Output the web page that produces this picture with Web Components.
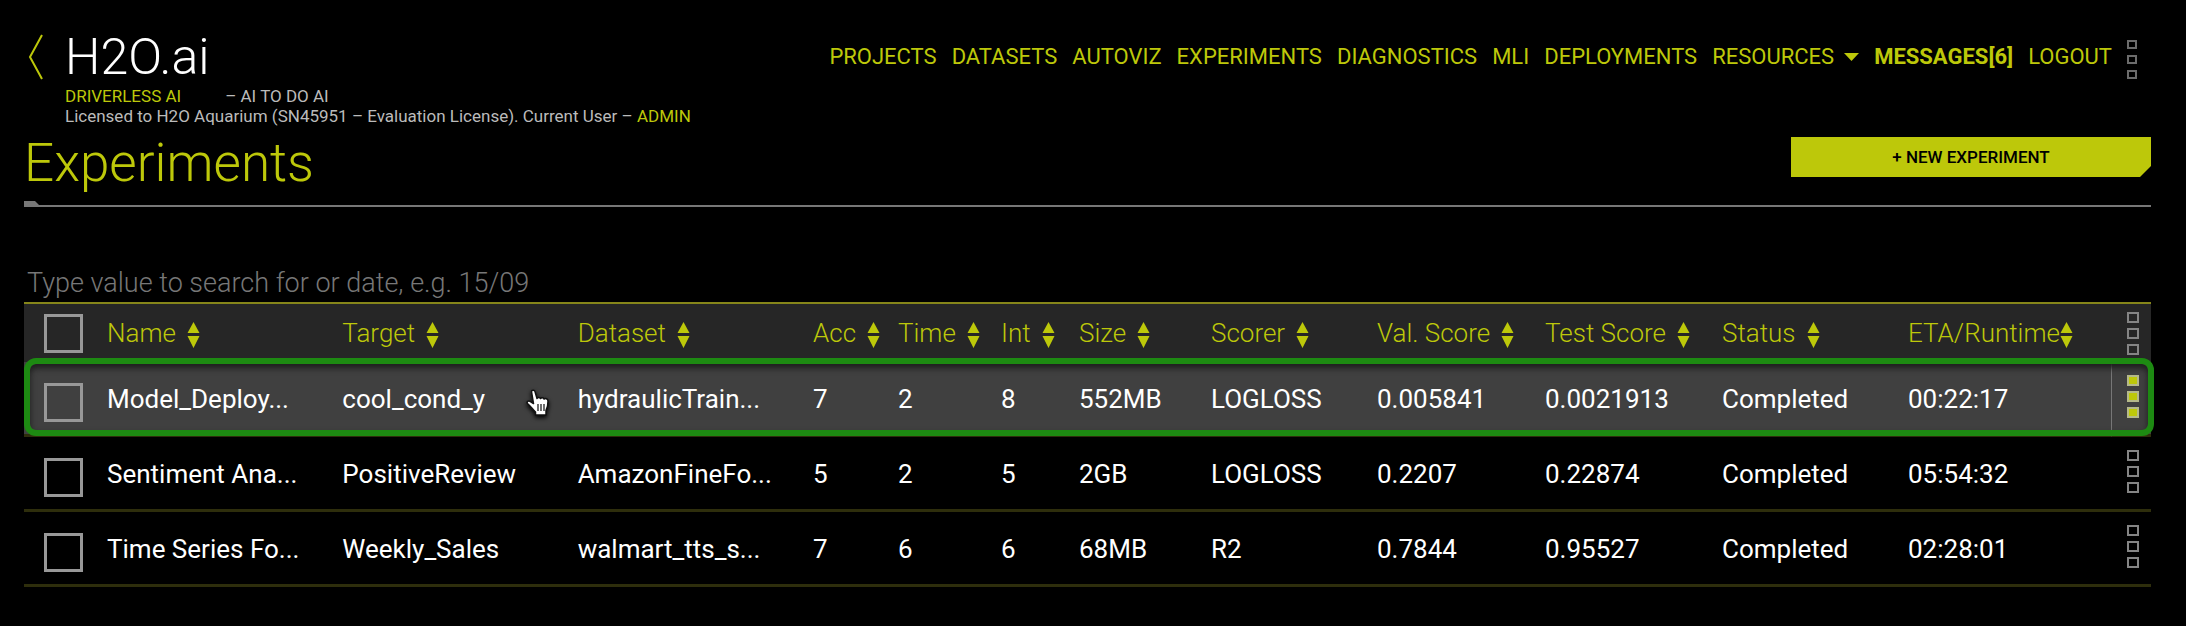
<!DOCTYPE html>
<html lang="en">
<head>
<meta charset="utf-8">
<title>Experiments</title>
<style>
  :root { --lime: #bdc80a; --line: #2e2e0c; }
  body { margin: 0; background: #000; color: #fff; font-family: Roboto, "Liberation Sans", sans-serif; }
</style>
</head>
<body>
<experiments-page></experiments-page>

<script>
const define = (name, html, setup) => customElements.define(name, class extends HTMLElement {
  constructor() {
    super();
    const template = document.createElement('template');
    template.innerHTML = html;
    this.attachShadow({ mode: 'open' }).append(template.content.cloneNode(true));
  }
  connectedCallback() { if (setup) setup.call(this, this.shadowRoot); }
});

/* Three stacked squares that open a menu */
define('kebab-menu', `
  <style>
    :host { display: block; }
    button { display: flex; flex-direction: column; gap: 5px; padding: 0; border: 0; background: none; }
    i { box-sizing: border-box; width: 12px; height: 11px; border: 2px solid #858585; }
    :host([active]) i { background: var(--lime); border-color: #b5b98a; }
    :host([small]) button { gap: 6px; }
    :host([small]) i { width: 10px; height: 9px; border-color: #6c6c6c; }
  </style>
  <button type="button" aria-label="More actions"><i></i><i></i><i></i></button>`);

define('sort-icon', `
  <style>:host { display: inline-block; margin-left: 11px; vertical-align: middle; } svg { display: block; }</style>
  <svg width="13" height="26" viewBox="0 0 13 26" fill="#bdc80a" aria-hidden="true">
    <path d="M6.500 0L12.500 11H.5zM.5 14H12.500L6.500 26z"/>
  </svg>`);

define('row-check', `
  <style>
    :host { display: block; }
    input { display: block; box-sizing: border-box; width: 39px; height: 39px; margin: 0;
            appearance: none; border: 3px solid #989898; }
  </style>
  <input type="checkbox">`, function (root) {
    root.querySelector('input').setAttribute('aria-label', this.getAttribute('label'));
  });

define('hand-pointer', `
  <style>:host { display: block; } svg { display: block; overflow: visible; filter: drop-shadow(0 2px 2px #000); }</style>
  <svg width="24" height="28" viewBox="0 0 24 28" aria-hidden="true">
    <path fill="#fff" stroke="#111" stroke-width="1.500" stroke-linejoin="round"
      d="M5.500 2.500C5.500 1 8.500.5 9 2.500l2 7c.5-1.500 3-1.500 3.500 0 .8-1.200 3-1 3.500.6 1-1 4-.4 4 1.800 0 4.500-.5 7-2 9.500V26H9.500v-3C7 21 5 17.500 1.500 14.500c-1.200-1.200.5-3.200 2.500-2.200l3.500 2.200z"/>
    <path stroke="#222" stroke-width="1.300" d="M12 15v7M15 15v7M18 15v7"/>
  </svg>`);

define('app-brand', `
  <style>
    :host { display: flex; gap: 22px; }
    svg { display: block; margin-top: 34px; }
    a.logo { display: block; color: #fff; text-decoration: none; font-size: 50px; font-weight: 300; line-height: 56px; padding-top: 29px; }
    p { margin: 0; font-size: 17px; line-height: 20px; color: #bbb; white-space: nowrap; }
    p.tag { display: flex; gap: 44px; padding-top: 1px; }
    b { font-weight: 400; color: var(--lime); }
  </style>
  <svg width="15" height="46" viewBox="0 0 15 46" fill="none" stroke="#bdc80a" stroke-width="2" role="img" aria-label="Back">
    <path d="M14 1L2 23l12 22"/>
  </svg>
  <div>
    <a class="logo" href="#"><slot name="logo"></slot></a>
    <p class="tag"><b>DRIVERLESS AI</b><span>– AI TO DO AI</span></p>
    <p><slot name="license"></slot> <b><slot name="user"></slot></b></p>
  </div>`);

define('nav-link', `
  <style>
    :host { display: block; }
    a { display: flex; align-items: center; gap: 10px; color: var(--lime); text-decoration: none; font-size: 22px; line-height: 24px; white-space: nowrap; }
    :host([strong]) a { font-weight: 700; }
    svg { display: none; }
    :host([menu]) svg { display: block; }
  </style>
  <a href="#"><slot></slot><svg width="15" height="8" viewBox="0 0 15 8" fill="#bdc80a"><path d="M0 0h15L7.500 8z"/></svg></a>`);

define('main-nav', `
  <style>
    :host { display: block; }
    nav { display: flex; align-items: center; gap: 15px; padding-top: 45px; }
  </style>
  <nav><slot></slot></nav>`);

define('page-heading', `
  <style>
    :host { display: block; }
    .bar { display: flex; justify-content: space-between; height: 66px; }
    h1 { margin: 0; font-size: 53px; font-weight: 300; line-height: 56px; color: var(--lime); }
    button { width: 360px; height: 40px; margin-top: 2px; padding: 0; border: 0; background: var(--lime); color: #000;
             font: 500 17px/20px Roboto, sans-serif; clip-path: polygon(0 0, 100% 0, 100% 29px, calc(100% - 11px) 100%, 0 100%); }
    .rule { height: 6px; box-sizing: border-box; border-bottom: 2px solid #777; }
    .rule::before { content: ""; display: block; width: 16px; height: 5px; background: #777; clip-path: polygon(0 0, 11px 0, 100% 100%, 0 100%); }
  </style>
  <div class="bar"><h1><slot></slot></h1><button type="button"><slot name="action"></slot></button></div>
  <div class="rule"></div>`);

define('search-field', `
  <style>
    :host { display: block; }
    input { display: block; box-sizing: border-box; width: 100%; height: 42px; padding: 2px 3px 0; border: 0; outline: 0;
            border-bottom: 2px solid #86861a; background: none; color: #fff; font: 300 27px/38px Roboto, sans-serif; }
    input::placeholder { color: #777; opacity: 1; }
  </style>
  <input type="text" aria-label="Search experiments" placeholder="Type value to search for or date, e.g. 15/09">`);

const columns = ['Name', 'Target', 'Dataset', 'Acc', 'Time', 'Int', 'Size', 'Scorer', 'Val. Score', 'Test Score', 'Status', 'ETA/Runtime'];
const rows = [
  ['Model_Deploy...', 'cool_cond_y', 'hydraulicTrain...', '7', '2', '8', '552MB', 'LOGLOSS', '0.005841', '0.0021913', 'Completed', '00:22:17'],
  ['Sentiment Ana...', 'PositiveReview', 'AmazonFineFo...', '5', '2', '5', '2GB', 'LOGLOSS', '0.2207', '0.22874', 'Completed', '05:54:32'],
  ['Time Series Fo...', 'Weekly_Sales', 'walmart_tts_s...', '7', '6', '6', '68MB', 'R2', '0.7844', '0.95527', 'Completed', '02:28:01']
];
/* Zero marks a column that shares the width left over */
const widths = [63, 0, 0, 0, 85, 103, 78, 132, 166, 168, 177, 186, 223, 40];

define('experiments-table', `
  <style>
    :host { display: block; }
    table { width: 100%; table-layout: fixed; border-collapse: separate; border-spacing: 0; font-size: 26px; line-height: 32px; }
    th, td { padding: 0 0 0 20px; text-align: left; white-space: nowrap; box-sizing: border-box; }
    th { height: 58px; background: #262626; color: var(--lime); font-weight: 300; }
    td { height: 75px; padding-top: 2px; border-bottom: 3px solid var(--line); }
    td row-check { margin-top: 6px; }
    td kebab-menu { margin-bottom: 6px; }
    .menu { padding-left: 16px; }
    .tight sort-icon { margin-left: 0; }
    .selected { position: relative; }
    .selected td { background: #404040; }
    .selected .menu { border-left: 1px solid #777; padding-left: 15px; }
    .ring { position: absolute; z-index: 1; inset: -4px -3px 1px 0; border: 6px solid #1d8a12; border-radius: 12px;
            box-shadow: inset 0 4px 6px #1c1c1c; pointer-events: none; }
    .selected td:nth-child(3) { position: relative; }
    hand-pointer { position: absolute; left: 204px; top: 27px; }
  </style>
  <table>
    <colgroup>${widths.map(w => w ? `<col style="width:${w}px">` : '<col>').join('')}</colgroup>
    <thead><tr><th><row-check label="Select all"></row-check></th>${columns.map(c =>
      `<th${c === 'ETA/Runtime' ? ' class="tight"' : ''}>${c}<sort-icon></sort-icon></th>`).join('')}<th class="menu"><kebab-menu></kebab-menu></th></tr></thead>
    <tbody>${rows.map((r, i) => `<tr${i ? '' : ' class="selected"'}><td><row-check label="Select ${r[0]}"></row-check>${i ? '' : '<span class="ring"></span>'}</td>${r.map((v, j) =>
      `<td>${v}${!i && j === 1 ? '<hand-pointer></hand-pointer>' : ''}</td>`).join('')}<td class="menu"><kebab-menu${i ? '' : ' active'}></kebab-menu></td></tr>`).join('')}</tbody>
  </table>`);

define('experiments-page', `
  <style>
    :host { display: block; padding: 0 35px 36px 24px; }
    header { display: flex; justify-content: space-between; align-items: flex-start; padding: 0 14px 0 4px; height: 135px; }
    .right { display: flex; align-items: flex-start; gap: 15px; }
    .right kebab-menu { padding-top: 40px; }
    search-field { margin-top: 55px; }
  </style>
  <header>
    <app-brand>
      <span slot="logo">H2O.ai</span>
      <span slot="license">Licensed to H2O Aquarium (SN45951 – Evaluation License). Current User –</span>
      <span slot="user">ADMIN</span>
    </app-brand>
    <div class="right">
      <main-nav>
        <nav-link>PROJECTS</nav-link><nav-link>DATASETS</nav-link><nav-link>AUTOVIZ</nav-link><nav-link>EXPERIMENTS</nav-link>
        <nav-link>DIAGNOSTICS</nav-link><nav-link>MLI</nav-link><nav-link>DEPLOYMENTS</nav-link><nav-link menu>RESOURCES</nav-link>
        <nav-link strong>MESSAGES[6]</nav-link><nav-link>LOGOUT</nav-link>
      </main-nav>
      <kebab-menu small></kebab-menu>
    </div>
  </header>
  <page-heading>Experiments<span slot="action">+ NEW EXPERIMENT</span></page-heading>
  <search-field></search-field>
  <experiments-table></experiments-table>`);
</script>
</body>
</html>
